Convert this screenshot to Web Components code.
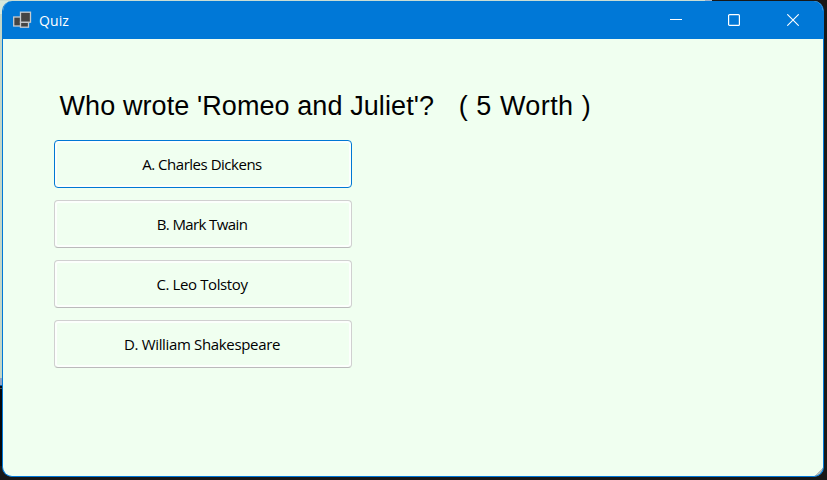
<!DOCTYPE html>
<html lang="en">
<head>
<meta charset="utf-8">
<title>Quiz</title>
<style>
html, body { margin: 0; height: 100%; overflow: hidden; }
body {
  box-sizing: border-box; width: 827px; height: 480px; padding: 1px 3px 3px 2px;
  background:
    linear-gradient(#c9ddd4, #c9ddd4) 0 0 / 705px 1px no-repeat,
    linear-gradient(#9db1cc, #9db1cc) 705px 0 / 7px 1px no-repeat,
    linear-gradient(#d5e8dc, #d5e8dc) 0 0 / 14px 14px no-repeat,
    linear-gradient(#c3d6c8 0 378px, #8fa3c4 378px 385px, #0a5fa8 385px 386px, #050a0e 386px 388px, #555 388px 389px, #050a0e 389px 466px, #181818 466px) 0 0 / 14px 480px no-repeat,
    #181818;
}
</style>
</head>
<body>
<app-window>
  <title-bar slot="title">Quiz</title-bar>
  <quiz-question>Who wrote 'Romeo and Juliet'?<span slot="worth">&nbsp;&nbsp; ( 5 Worth )</span></quiz-question>
  <answer-list>
    <answer-button focused style="--track:-.48px">A. Charles Dickens</answer-button>
    <answer-button style="--track:-.6px">B. Mark Twain</answer-button>
    <answer-button style="--track:-.38px">C. Leo Tolstoy</answer-button>
    <answer-button style="--track:-.34px">D. William Shakespeare</answer-button>
  </answer-list>
</app-window>
<script>
function define(name, html) {
  customElements.define(name, class extends HTMLElement {
    constructor() {
      super();
      this.attachShadow({ mode: 'open' }).innerHTML = html;
    }
  });
}

define('app-window', `
<style>
:host { display: flex; flex-direction: column; box-sizing: border-box; width: 822px; height: 476px;
  border: 1px solid #0078d7; border-top: 0; border-radius: 10px; overflow: hidden;
  background: linear-gradient(135deg, transparent 50%, #b8c0bc 50%) right bottom / 8px 8px no-repeat, #f0fff0; }
main { display: flex; flex-direction: column; padding: 49px 51px; }
</style>
<slot name="title"></slot><main><slot></slot></main>`);

define('title-bar', `
<style>
:host { display: flex; align-items: center; height: 38px; flex: none; background: #0078d7; color: #fff;
  margin: 0 -1px; padding-left: 11px; font: 14px/20px "Open Sans", "Noto Sans", sans-serif; }
.name { margin-left: 7px; flex: 1; padding-top: 1px; letter-spacing: .1px; }
window-controls { flex: none; }
svg { display: block; }
</style>
<svg width="19" height="18" viewBox="0 0 19 18" fill="#454545" stroke="#c8ccd0" stroke-width="1.3">
  <rect x=".7" y="6" width="7" height="9"/>
  <rect x="7.5" y="11.2" width="8" height="5"/>
  <rect x="7.5" y="1.2" width="10" height="10"/>
</svg>
<span class="name"><slot></slot></span>
<window-controls></window-controls>`);

define('window-controls', `
<style>
:host { display: grid; grid-template-columns: 59px 58px 60px; width: 177px; }
svg { display: block; justify-self: start; margin-left: 23px; }
svg:nth-of-type(2) { margin-left: 22px; }
</style>
<svg width="12" height="12" fill="none" stroke="#fff"><path d="M0 5.5h12" shape-rendering="crispEdges"/></svg>
<svg width="12" height="12" fill="none" stroke="#fff" stroke-width="1.2"><rect x=".6" y=".6" width="10.8" height="10.8" rx="1"/></svg>
<svg width="12" height="12" fill="none" stroke="#fff" stroke-width="1.1"><path d="M.3.3l11.4 11.4M11.7.3L.3 11.7"/></svg>`);

define('quiz-question', `
<style>
:host { display: block; height: 36px; padding-left: 5.5px; color: #000; white-space: nowrap;
  font: 27px/36px "Liberation Sans", Arial, sans-serif; letter-spacing: .09px; }
::slotted([slot=worth]) { letter-spacing: .4px; word-spacing: .3px; }
</style><slot></slot><slot name="worth"></slot>`);

define('answer-list', `
<style>
:host { display: grid; grid-auto-rows: 48px; row-gap: 12px; width: 298px; margin-top: 16px; }
</style><slot></slot>`);

define('answer-button', `
<style>
:host { display: grid; }
button { box-sizing: border-box; width: 100%; height: 100%; margin: 0; padding: 0 4px 0 2px;
  border: 1px solid #d0d0d0; border-bottom-color: #bababa; border-radius: 4px;
  background: #f0fff0; box-shadow: inset 0 0 0 2px #fcfffc; color: #000;
  font: 15px/20px "Open Sans", "Noto Sans", sans-serif; letter-spacing: var(--track, 0); white-space: nowrap; }
:host([focused]) button { border-color: #0078d4; }
</style><button type="button"><slot></slot></button>`);
</script>
</body>
</html>
